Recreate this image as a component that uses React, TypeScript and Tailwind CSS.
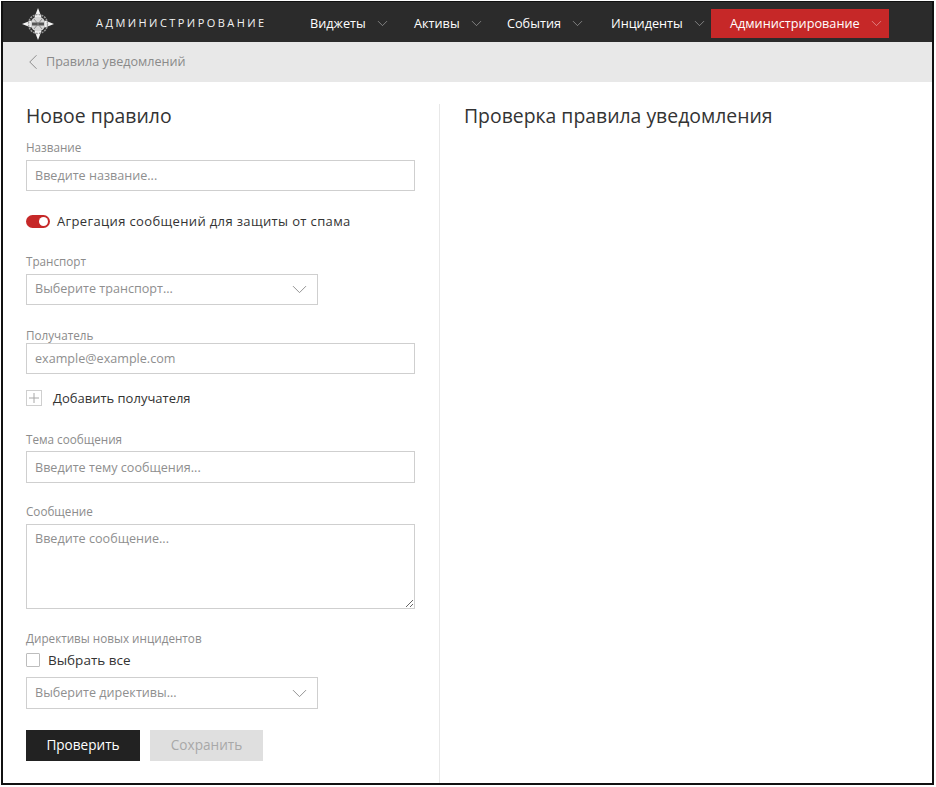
import React from "react";
import { ChevronDown, ChevronLeft } from "lucide-react";

const navItems = [
  { label: "Виджеты", className: "w-[104px]" },
  { label: "Активы", className: "w-[93px]" },
  { label: "События", className: "w-[104px]" },
  { label: "Инциденты", className: "w-[100px]" },
];

const Logo = () => (
  <svg width="32" height="32" viewBox="0 0 32 32" className="shrink-0">
    <path d="M16 0 L19.5 9 L12.5 9 Z M16 32 L19.5 23 L12.5 23 Z M0 16 L9 12.5 L9 19.5 Z M32 16 L23 12.5 L23 19.5 Z" fill="#f5f5f5" />
    <circle cx="16" cy="16" r="9.5" fill="none" stroke="#9a9a9a" strokeWidth="1.5" strokeDasharray="2 1" />
    <circle cx="16" cy="16" r="7.5" fill="#d4d4d4" />
    <rect x="10" y="14.5" width="12" height="3" fill="#555" />
    <path d="M12 11 L20 21 M20 11 L12 21" stroke="#777" strokeWidth="0.8" />
  </svg>
);

const Label = ({ children, className = "" }: { children: React.ReactNode; className?: string }) => (
  <div className={`text-[11.7px] leading-[16px] text-[#8c8c8c] ${className}`}>{children}</div>
);

const TextBox = ({ placeholder, className = "h-[31px]" }: { placeholder: string; className?: string }) => (
  <input
    placeholder={placeholder}
    className={`block w-[389px] border border-[#cfcfcf] px-2 text-[12.6px] text-[#333] placeholder:text-[#8f8f8f] outline-none ${className}`}
  />
);

const SelectBox = ({ placeholder, className = "" }: { placeholder: string; className?: string }) => (
  <div className={`flex items-center justify-between w-[292px] border border-[#cfcfcf] pl-2 pr-[5px] text-[12.6px] text-[#8f8f8f] ${className}`}>
    <span>{placeholder}</span>
    <ChevronDown size={25} strokeWidth={0.9} className="text-[#8c8c8c]" />
  </div>
);

export default function App() {
  return (
    <div className="w-[933px] h-[784px] ml-px mt-px border-2 border-t border-[#111] bg-white font-['Open_Sans',sans-serif] overflow-hidden flex flex-col">
      {/* Top navigation */}
      <header className="h-[40px] pt-[3px] bg-[#2b2b2b] flex items-center shrink-0">
        <div className="ml-[19px] w-[32px]">
          <Logo />
        </div>
        <div className="ml-[42px] w-[214px] text-[11px] tracking-[2.45px] text-[#f2f2f2]">АДМИНИСТРИРОВАНИЕ</div>
        <nav className="flex items-center h-[29px]">
          {navItems.map((item) => (
            <div key={item.label} className={`flex items-center text-[12.7px] text-white ${item.className}`}>
              <span>{item.label}</span>
              <ChevronDown size={17} strokeWidth={0.9} className="ml-[8px] text-[#b0b0b0]" />
            </div>
          ))}
          <div className="flex items-center w-[178px] h-[29px] bg-[#c62828] pl-[19px] text-[12.7px] text-white">
            <span>Администрирование</span>
            <ChevronDown size={17} strokeWidth={0.9} className="ml-[8px] text-[#eeb0b0]" />
          </div>
        </nav>
      </header>

      {/* Breadcrumb */}
      <div className="h-[40px] bg-[#e8e8e8] flex items-center pl-[17px] text-[12.6px] text-[#8a8a8a] shrink-0">
        <ChevronLeft size={26} strokeWidth={0.9} className="text-[#8a8a8a]" />
        <span>Правила уведомлений</span>
      </div>

      <main className="flex flex-1 min-h-0 pt-[22px]">
        {/* Form column */}
        <section className="w-[437px] border-r border-[#e8e8e8] pl-[23px] shrink-0">
          <h1 className="text-[19.4px] leading-[24px] text-[#333]">Новое правило</h1>
          <Label className="mt-[11px] mb-[5px]">Название</Label>
          <TextBox placeholder="Введите название..." />

          <div className="flex items-center mt-[22px]">
            <span className="relative w-[24px] h-[13px] rounded-full bg-[#c62828]">
              <span className="absolute right-[2px] top-[2px] w-[9px] h-[9px] rounded-full bg-white" />
            </span>
            <span className="ml-[7px] text-[13px] leading-[16px] tracking-[0.36px] text-[#333]">
              Агрегация сообщений для защиты от спама
            </span>
          </div>

          <Label className="mt-[24px] mb-[5px]">Транспорт</Label>
          <SelectBox placeholder="Выберите транспорт..." className="h-[31px]" />

          <Label className="mt-[22px] mb-0">Получатель</Label>
          <TextBox placeholder="example@example.com" />

          <div className="flex items-center mt-[16px]">
            <span className="flex items-center justify-center w-[16px] h-[16px] border border-[#cfcfcf] text-[#a8a8a8]">
              <svg width="10" height="10" viewBox="0 0 10 10">
                <path d="M5 0 V10 M0 5 H10" stroke="currentColor" strokeWidth="1" />
              </svg>
            </span>
            <span className="ml-[11px] text-[13px] leading-[16px] text-[#333]">Добавить получателя</span>
          </div>

          <Label className="mt-[25px] mb-[4px]">Тема сообщения</Label>
          <TextBox placeholder="Введите тему сообщения..." className="h-[32px]" />

          <Label className="mt-[20px] mb-[5px]">Сообщение</Label>
          <textarea
            placeholder="Введите сообщение..."
            className="block w-[389px] h-[85px] border border-[#cfcfcf] px-2 py-[5px] text-[12.6px] placeholder:text-[#8f8f8f] outline-none"
          />

          <Label className="mt-[21px]">Директивы новых инцидентов</Label>
          <div className="flex items-center mt-[6px]">
            <span className="w-[14px] h-[14px] border border-[#bdbdbd] rounded-[1px]" />
            <span className="ml-[8px] text-[13.5px] leading-[16px] text-[#333]">Выбрать все</span>
          </div>
          <SelectBox placeholder="Выберите директивы..." className="h-[32px] mt-[9px]" />

          <div className="flex gap-[10px] mt-[21px]">
            <button className="w-[114px] h-[31px] bg-[#222] text-white text-[13.6px]">Проверить</button>
            <button className="w-[113px] h-[31px] bg-[#dfdfdf] text-[#a8a8a8] text-[13.6px]">Сохранить</button>
          </div>
        </section>

        {/* Preview column */}
        <section className="pl-[24px]">
          <h2 className="text-[19.4px] leading-[24px] text-[#333]">Проверка правила уведомления</h2>
        </section>
      </main>
    </div>
  );
}
